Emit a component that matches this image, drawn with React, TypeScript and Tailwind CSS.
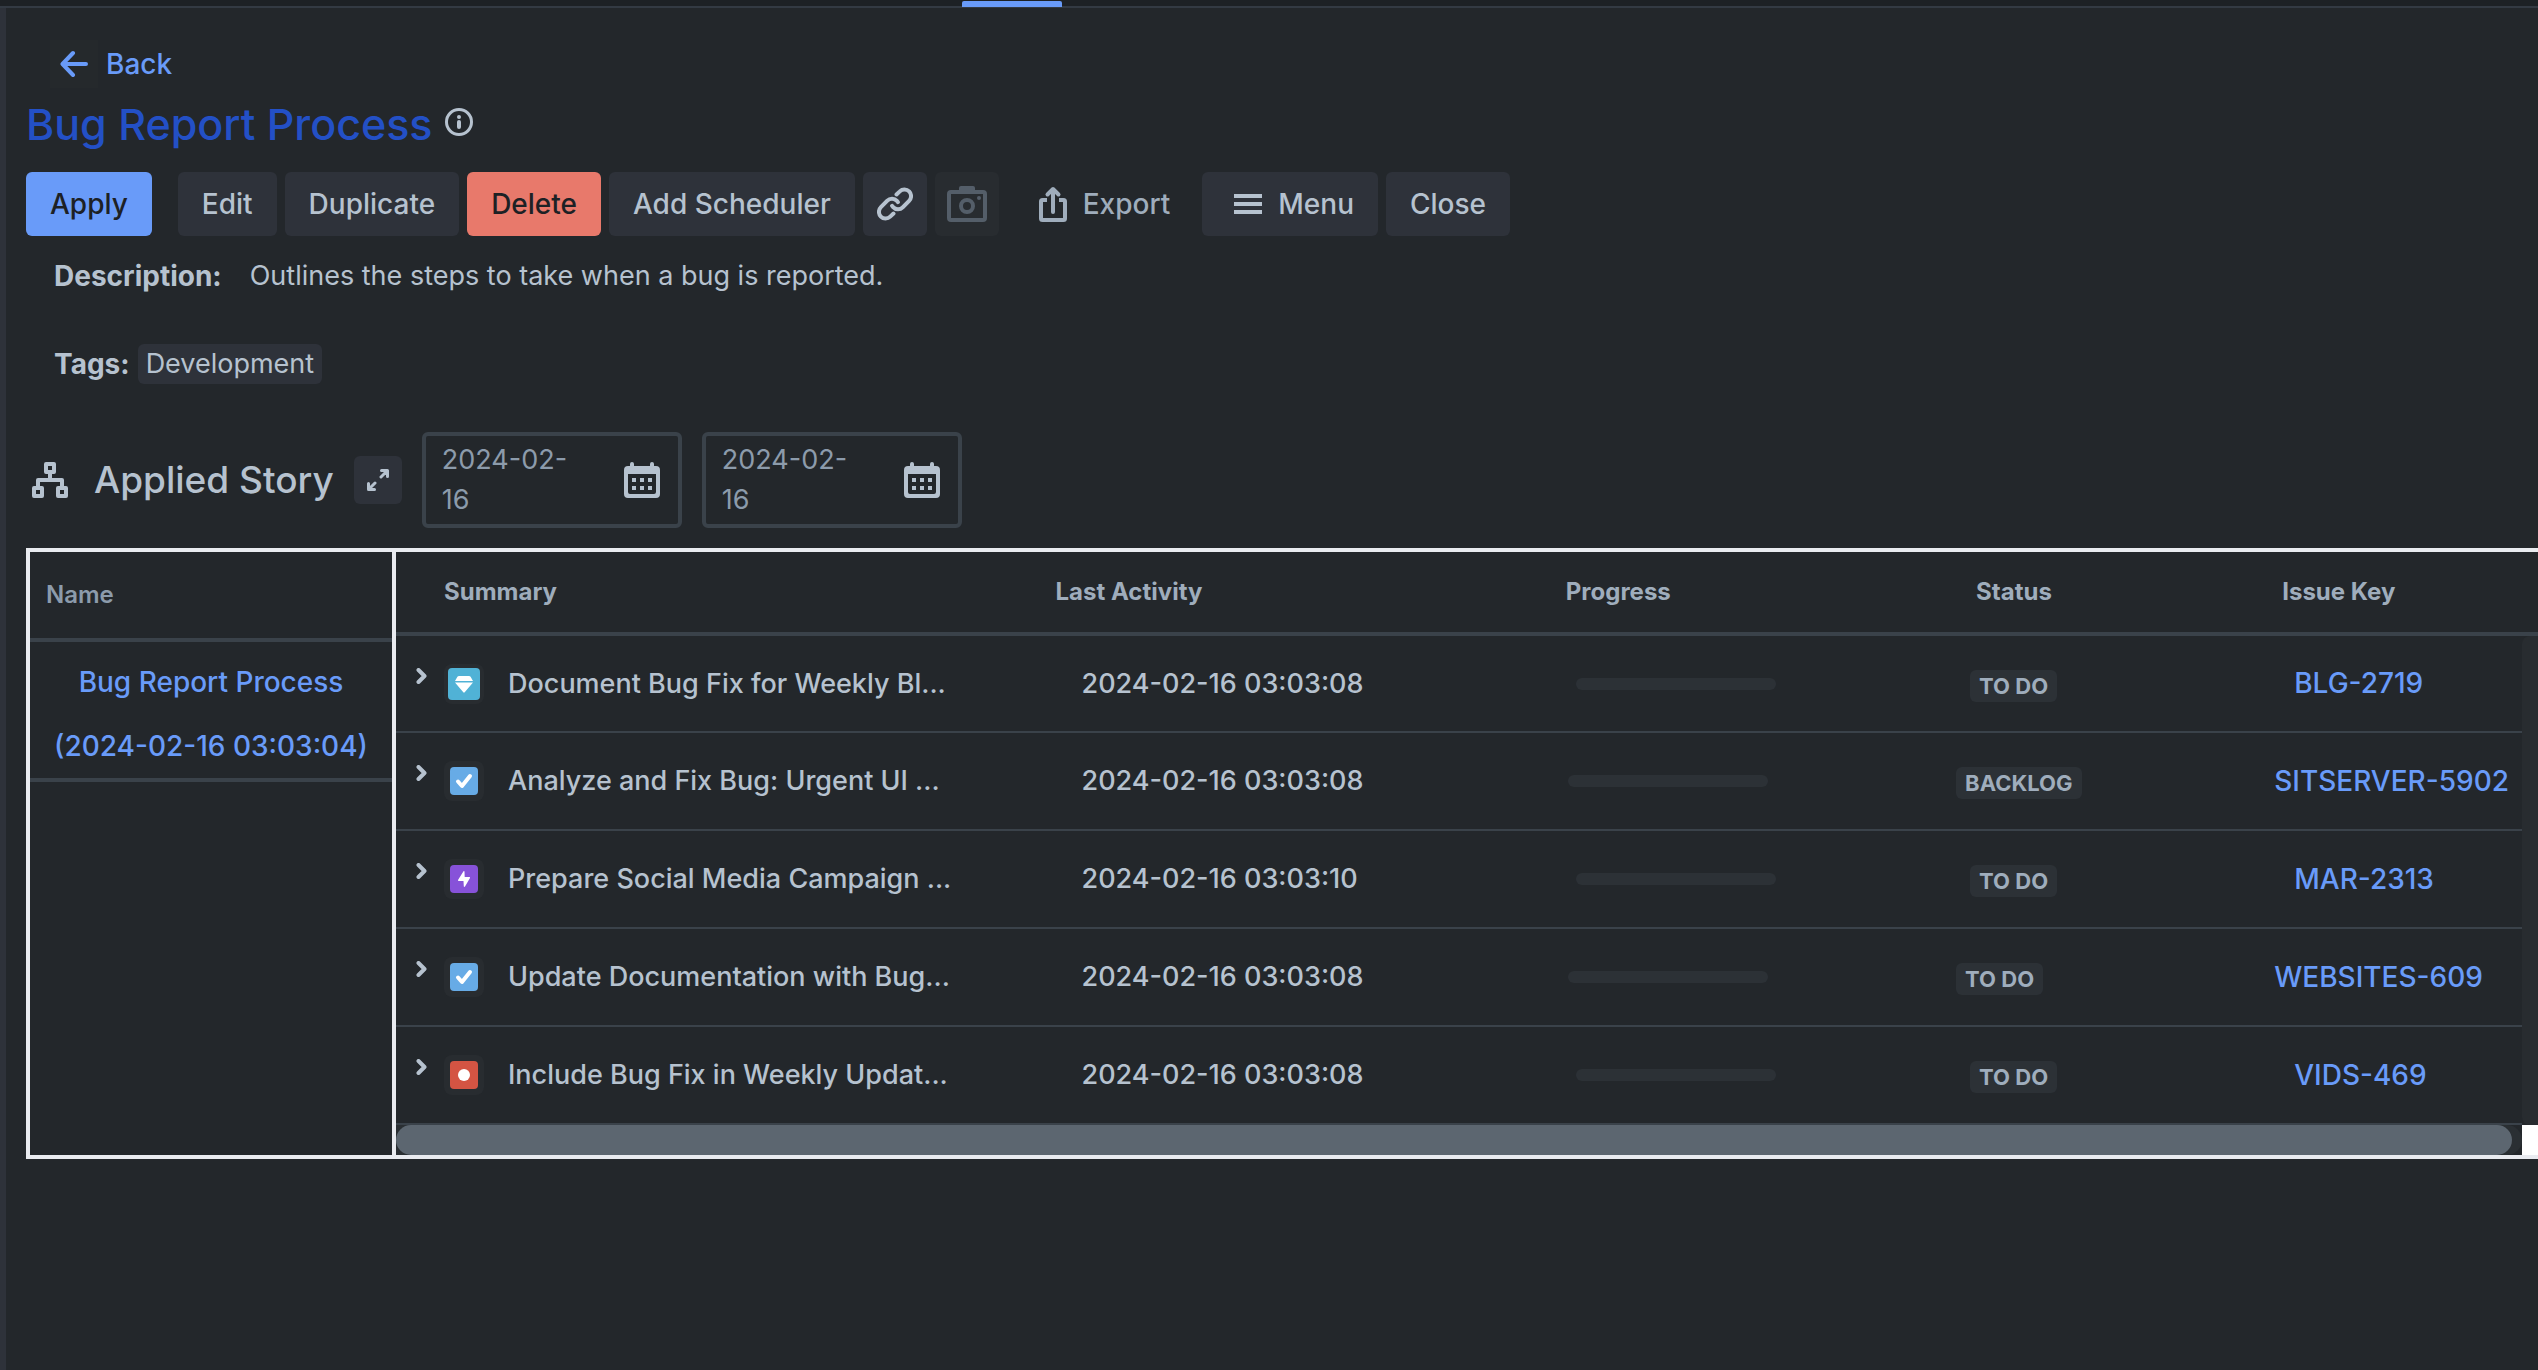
import type { ReactNode } from "react";

type IconKind = "story" | "task" | "epic" | "bug";

interface Issue {
  kind: IconKind;
  summary: string;
  activity: string;
  status: string;
  issueKey: string;
  nested: boolean;
}

const issues: Issue[] = [
  { kind: "story", summary: "Document Bug Fix for Weekly Bl...", activity: "2024-02-16 03:03:08", status: "TO DO", issueKey: "BLG-2719", nested: true },
  { kind: "task", summary: "Analyze and Fix Bug: Urgent UI ...", activity: "2024-02-16 03:03:08", status: "BACKLOG", issueKey: "SITSERVER-5902", nested: false },
  { kind: "epic", summary: "Prepare Social Media Campaign ...", activity: "2024-02-16 03:03:10", status: "TO DO", issueKey: "MAR-2313", nested: true },
  { kind: "task", summary: "Update Documentation with Bug...", activity: "2024-02-16 03:03:08", status: "TO DO", issueKey: "WEBSITES-609", nested: false },
  { kind: "bug", summary: "Include Bug Fix in Weekly Updat...", activity: "2024-02-16 03:03:08", status: "TO DO", issueKey: "VIDS-469", nested: true },
];

function ArrowLeftIcon() {
  return (
    <svg width="28" height="28" viewBox="0 0 28 28" fill="none" stroke="currentColor" strokeWidth="4" strokeLinecap="round" strokeLinejoin="round" aria-hidden="true">
      <path d="M26 14H3M13 3 2.5 14 13 25" />
    </svg>
  );
}

function InfoIcon() {
  return (
    <svg width="28" height="28" viewBox="0 0 28 28" fill="none" aria-hidden="true">
      <circle cx="14" cy="14" r="12.5" stroke="currentColor" strokeWidth="3" />
      <circle cx="14" cy="9" r="2" fill="currentColor" />
      <path d="M14 14v5" stroke="currentColor" strokeWidth="4" strokeLinecap="round" />
    </svg>
  );
}

function LinkIcon() {
  return (
    <svg width="36" height="34" viewBox="0 0 36 34" fill="none" stroke="currentColor" strokeWidth="4" strokeLinecap="round" strokeLinejoin="round" aria-hidden="true">
      <path d="M19.5 7.5 22.8 4.4a6.6 6.6 0 0 1 9.3 9.4l-6.4 6.6a6.6 6.6 0 0 1-9.6-.2l-1-1.4" />
      <path d="M16.5 26.5 13.2 29.6a6.6 6.6 0 0 1-9.3-9.4l6.4-6.6a6.6 6.6 0 0 1 9.6.2l1 1.4" />
    </svg>
  );
}

function CameraIcon() {
  return (
    <svg width="40" height="36" viewBox="0 0 40 36" fill="none" aria-hidden="true">
      <rect x="2" y="6" width="36" height="28" rx="2" stroke="currentColor" strokeWidth="4" />
      <path d="M12 5V2a2 2 0 0 1 2-2h12a2 2 0 0 1 2 2v3z" fill="currentColor" />
      <circle cx="20" cy="20" r="6" stroke="currentColor" strokeWidth="4" />
      <circle cx="32" cy="12" r="2" fill="currentColor" />
    </svg>
  );
}

function ExportIcon() {
  return (
    <svg width="28" height="36" viewBox="0 0 28 36" fill="none" stroke="currentColor" strokeWidth="4" aria-hidden="true">
      <path d="M8 14H3.5Q2 14 2 15.5V32.5Q2 34 3.5 34H24.5Q26 34 26 32.5V15.5Q26 14 24.5 14H20" />
      <path d="M14 26V4" strokeLinecap="round" />
      <path d="M8.5 8.5 14 3l5.5 5.5" strokeLinecap="round" strokeLinejoin="round" />
    </svg>
  );
}

function MenuIcon() {
  return (
    <svg width="28" height="20" viewBox="0 0 28 20" fill="currentColor" aria-hidden="true">
      <path d="M0 0h28v4H0zM0 8h28v4H0zM0 16h28v4H0z" />
    </svg>
  );
}

function HierarchyIcon() {
  return (
    <svg width="36" height="36" viewBox="0 0 36 36" fill="none" stroke="currentColor" strokeWidth="4" strokeLinejoin="round" aria-hidden="true">
      <rect x="14" y="2" width="8" height="8" />
      <rect x="2" y="26" width="8" height="8" />
      <rect x="26" y="26" width="8" height="8" />
      <path d="M18 11v7M6 26v-8h24v8" />
    </svg>
  );
}

function ExpandIcon() {
  return (
    <svg width="22" height="22" viewBox="0 0 22 22" fill="none" stroke="currentColor" strokeWidth="3" strokeLinecap="round" strokeLinejoin="round" aria-hidden="true">
      <path d="M14.5 1.5h6v6M20 2l-6 6M7.5 20.5h-6v-6M2 20l6-6" />
    </svg>
  );
}

function CalendarIcon() {
  return (
    <svg width="36" height="36" viewBox="0 0 36 36" fill="currentColor" className="shrink-0" aria-hidden="true">
      <path fillRule="evenodd" d="M6 5V2a2 2 0 0 1 4 0v2h16V2a2 2 0 0 1 4 0v2h2a4 4 0 0 1 4 4v24a4 4 0 0 1-4 4H4a4 4 0 0 1-4-4V8a4 4 0 0 1 4-4h2zM4 12v18a2 2 0 0 0 2 2h24a2 2 0 0 0 2-2V12z" />
      <path d="M8 16h4v4H8zM16 16h4v4h-4zM24 16h4v4h-4zM8 24h4v4H8zM16 24h4v4h-4zM24 24h4v4h-4z" />
    </svg>
  );
}

function ChevronIcon() {
  return (
    <svg width="12" height="16" viewBox="0 0 12 16" fill="none" stroke="currentColor" strokeWidth="4" strokeLinecap="round" strokeLinejoin="round" aria-hidden="true">
      <path d="M2.5 2 8.5 8l-6 6" />
    </svg>
  );
}

function IssueIcon({ kind }: { kind: IconKind }) {
  if (kind === "story") {
    return (
      <svg width="32" height="32" viewBox="0 0 32 32" role="img" aria-label="Story">
        <rect width="32" height="32" rx="4" fill="#50b2d6" />
        <path d="M11 8h10q1 0 1.6.8L25 13H7l2.4-4.2Q10 8 11 8zM7 14.6h18L16.7 24.3q-.7.7-1.4 0z" fill="#fff" />
      </svg>
    );
  }
  return (
    <svg width="28" height="28" viewBox="0 0 28 28" role="img" aria-label={kind}>
      {kind === "task" && (
        <>
          <rect width="28" height="28" rx="4" fill="#67abe6" />
          <path d="M8 14.5l4 4.5 8-10" fill="none" stroke="#fff" strokeWidth="4" strokeLinecap="round" strokeLinejoin="round" />
        </>
      )}
      {kind === "epic" && (
        <>
          <rect width="28" height="28" rx="4" fill="#8752d9" />
          <path d="M13.5 6.3 8 15q-.3 1 .8 1h4.7l.3 5.5q.6.9 1.2 0L20 13q.4-1-.7-1h-4.6l-.2-5.5q-.4-.9-1-.2z" fill="#fff" />
        </>
      )}
      {kind === "bug" && (
        <>
          <rect width="28" height="28" rx="4" fill="#d45443" />
          <circle cx="14" cy="14" r="6" fill="#fff" />
        </>
      )}
    </svg>
  );
}

interface ToolButtonProps {
  children: ReactNode;
  label?: string;
  className?: string;
}

function ToolButton({ children, label, className = "bg-[#2e323a] px-6 text-[#b6c2cf]" }: ToolButtonProps) {
  return (
    <button type="button" aria-label={label} className={`flex h-16 items-center justify-center rounded-md text-[28px] font-medium whitespace-nowrap ${className}`}>
      {children}
    </button>
  );
}

function DateField({ label }: { label: string }) {
  return (
    <label className="flex h-24 w-[260px] items-center justify-between rounded-md border-4 border-[#3a424a] pr-[18px] pl-4 text-[#b6c2cf]">
      <textarea aria-label={label} rows={2} defaultValue="2024-02-16" className="block w-[150px] resize-none overflow-hidden bg-transparent leading-10 text-[#8c9bab] outline-none" />
      <CalendarIcon />
    </label>
  );
}

function IssueRow({ issue }: { issue: Issue }) {
  return (
    <tr className="h-[98px] border-b-2 border-[#3a424a]">
      <td className="p-0">
        <div className="flex items-center pl-5">
          <button type="button" aria-label="Expand row" className="mb-4 w-7">
            <ChevronIcon />
          </button>
          <span className="flex size-10 items-center justify-center rounded-lg bg-[#282c30]">
            <IssueIcon kind={issue.kind} />
          </span>
          <span className="pl-6 whitespace-nowrap">{issue.summary}</span>
        </div>
      </td>
      <td className="p-0 pl-13 whitespace-nowrap">{issue.activity}</td>
      <td className={issue.nested ? "p-0 pl-9" : "p-0 pl-7"}>
        <div role="progressbar" aria-label="Progress" aria-valuenow={0} className="h-3 w-[200px] rounded-full bg-[#2c3136]" />
      </td>
      <td className={issue.nested ? "p-0 pl-5" : "p-0 pl-1.5"}>
        <span className="mt-1 block w-fit rounded-md bg-[#2c3136] px-[9px] text-[22px] leading-8 font-bold whitespace-nowrap text-[#9fadbc]">
          {issue.status}
        </span>
      </td>
      <td className={issue.nested ? "p-0 pl-[38px]" : "p-0 pl-[18px]"}>
        <a href="#" className="text-[28px] whitespace-nowrap text-[#699bf9]">{issue.issueKey}</a>
      </td>
    </tr>
  );
}

export default function App() {
  return (
    <div className="flex min-h-screen flex-col overflow-x-hidden bg-[#23272b] font-['Inter',sans-serif] text-[27px] leading-10 text-[#b6c2cf]">
      <nav aria-label="Tabs" className="flex h-2 items-start border-b-2 border-[#333a43] bg-[#1d2125] pl-[962px]">
        <span className="mt-px h-1.5 w-[100px] shrink-0 rounded-t-xs bg-[#699bf9]" />
      </nav>

      <main className="flex-1 border-l-6 border-[#2e323a] pl-5">
        <a href="#" className="mt-8 ml-6 flex w-fit items-center gap-2 text-[28px] font-medium text-[#699bf9]">
          <span className="flex size-12 items-center justify-center bg-[#25292c]">
            <ArrowLeftIcon />
          </span>
          Back
        </a>

        <div className="mt-1.5 flex h-[60px] items-center gap-3">
          <h1 className="text-[43px] font-medium text-[#2350c6]">Bug Report Process</h1>
          <button type="button" aria-label="Information" className="mb-1">
            <InfoIcon />
          </button>
        </div>

        <div className="mt-[18px] flex items-center gap-2">
          <ToolButton className="mr-[18px] bg-[#699bf9] px-6 text-[#1d2125]">Apply</ToolButton>
          <ToolButton>Edit</ToolButton>
          <ToolButton>Duplicate</ToolButton>
          <ToolButton className="bg-[#e8796b] px-6 text-[#1d2125]">Delete</ToolButton>
          <ToolButton>Add Scheduler</ToolButton>
          <ToolButton label="Copy link" className="w-16 bg-[#2e323a]">
            <LinkIcon />
          </ToolButton>
          <ToolButton label="Take snapshot" className="w-16 bg-[#282c30] text-[#545e69]">
            <CameraIcon />
          </ToolButton>
          <ToolButton className="gap-4 pr-6 pl-8 text-[#9fadbc]">
            <ExportIcon />
            Export
          </ToolButton>
          <ToolButton className="gap-4 bg-[#2e323a] pr-6 pl-8">
            <MenuIcon />
            Menu
          </ToolButton>
          <ToolButton>Close</ToolButton>
        </div>

        <p className="mt-5 flex gap-7 pl-7">
          <strong className="text-[28px] font-bold">Description:</strong>
          <span>Outlines the steps to take when a bug is reported.</span>
        </p>

        <p className="mt-12 flex gap-2 pl-7">
          <strong className="text-[28px] font-bold">Tags:</strong>
          <span className="rounded-md bg-[#2e323a] px-2">Development</span>
        </p>

        <section className="mt-12">
          <div className="flex items-center gap-5 pl-1.5">
            <h2 className="flex items-center gap-[26px] text-[37px] font-medium">
              <HierarchyIcon />
              Applied Story
            </h2>
            <button type="button" aria-label="Expand" className="flex size-12 items-center justify-center rounded-md bg-[#2e323a]">
              <ExpandIcon />
            </button>
            <DateField label="Start date" />
            <DateField label="End date" />
          </div>

          <div className="mt-5 flex border-4 border-r-0 border-[#e9ebf0]">
            <table className="w-[362px] shrink-0 self-start">
              <thead>
                <tr className="h-[88px] border-b-4 border-[#3a424a]">
                  <th className="p-0 pl-4 text-left text-2xl font-semibold text-[#8c9bab]">Name</th>
                </tr>
              </thead>
              <tbody>
                <tr className="h-[140px] border-b-4 border-[#3a424a]">
                  <td className="p-0 pt-2 text-center text-[28px] leading-16 font-medium">
                    <a href="#" className="text-[#699bf9]">
                      Bug Report Process
                      <br />
                      (2024-02-16 03:03:04)
                    </a>
                  </td>
                </tr>
              </tbody>
            </table>

            <div className="flex min-w-0 flex-1 border-l-4 border-[#e9ebf0]">
              <div className="min-w-0 flex-1">
                <table className="w-full table-fixed font-medium">
                  <colgroup>
                    <col className="w-[29.8%]" />
                    <col className="w-[24%]" />
                    <col className="w-[19.3%]" />
                    <col className="w-[14.4%]" />
                    <col className="w-[12.5%]" />
                  </colgroup>
                  <thead>
                    <tr className="h-[82px] border-b-4 border-[#3a424a] text-left text-2xl text-[#9fadbc]">
                      <th className="p-0 pl-12 font-bold">Summary</th>
                      <th className="p-0 pl-[26px] font-bold">Last Activity</th>
                      <th className="p-0 pl-[26px] font-bold">Progress</th>
                      <th className="p-0 pl-[26px] font-bold">Status</th>
                      <th className="p-0 pl-[26px] font-bold">Issue Key</th>
                    </tr>
                  </thead>
                  <tbody>
                    {issues.map((issue) => (
                      <IssueRow key={issue.issueKey} issue={issue} />
                    ))}
                  </tbody>
                </table>
                <div className="h-[30px] rounded-r-full bg-[#2a2f33] pr-2.5">
                  <div className="h-full rounded-full bg-[#5c6670]" />
                </div>
              </div>
              <div className="flex w-4 shrink-0 flex-col">
                <div className="h-[84px] border-b-4 border-[#3a424a]" />
                <div className="flex-1 rounded-l-lg bg-[#282c30]" />
                <div className="h-[30px] bg-white" />
              </div>
            </div>
          </div>
        </section>
      </main>
    </div>
  );
}
